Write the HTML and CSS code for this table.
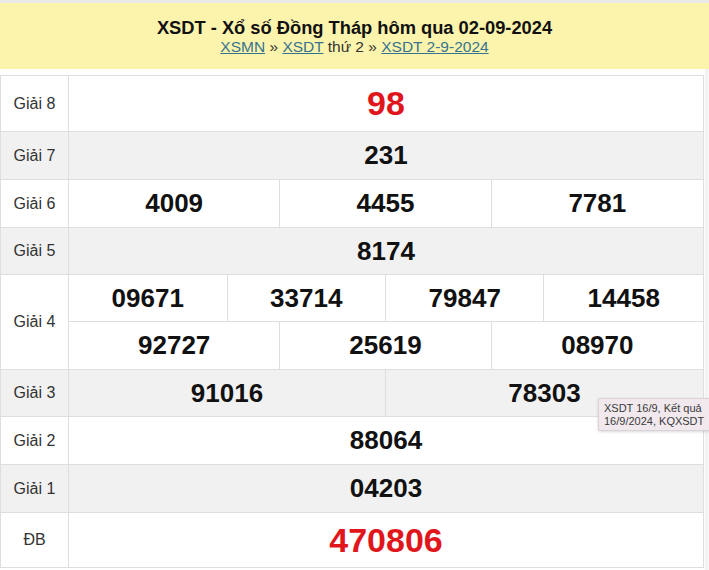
FILE: index.html
```html
<!DOCTYPE html>
<html lang="vi">
<head>
<meta charset="utf-8">
<title>XSDT 02-09-2024</title>
<link rel="stylesheet" href="styles.css">
</head>
<body>
<div class="page">
  <header class="head">
    <h1 class="title">XSDT - Xổ số Đồng Tháp hôm qua 02-09-2024</h1>
    <div class="crumbs"><a href="#">XSMN</a> » <a href="#">XSDT</a> thứ 2 » <a href="#">XSDT 2-9-2024</a></div>
  </header>
  <div class="results">
    <div class="lbl r8">Giải 8</div>
    <div class="num r8 full big red">98</div>

    <div class="lbl alt">Giải 7</div>
    <div class="num alt full">231</div>

    <div class="lbl">Giải 6</div>
    <div class="num s4">4009</div>
    <div class="num s4">4455</div>
    <div class="num s4 last">7781</div>

    <div class="lbl alt">Giải 5</div>
    <div class="num alt full">8174</div>

    <div class="lbl g4">Giải 4</div>
    <div class="num s3">09671</div>
    <div class="num s3">33714</div>
    <div class="num s3">79847</div>
    <div class="num s3 last">14458</div>
    <div class="num s4">92727</div>
    <div class="num s4">25619</div>
    <div class="num s4 last">08970</div>

    <div class="lbl alt">Giải 3</div>
    <div class="num alt s6">91016</div>
    <div class="num alt s6 last">78303</div>

    <div class="lbl">Giải 2</div>
    <div class="num full">88064</div>

    <div class="lbl alt">Giải 1</div>
    <div class="num alt full">04203</div>

    <div class="lbl rdb">ĐB</div>
    <div class="num rdb full huge red">470806</div>
  </div>
  <div class="tooltip">XSDT 16/9, Kết quả<br>16/9/2024, KQXSDT</div>
</div>
</body>
</html>
```

FILE: styles.css
```css
html, body {
  margin: 0;
  padding: 0;
  background: #ffffff;
  overflow: hidden;
}
body {
  font-family: "Liberation Sans", Arial, sans-serif;
  color: #111;
}
.page {
  position: relative;
  width: 709px;
  height: 570px;
  padding-top: 3px;
  background: linear-gradient(to right, #fff 0, #fff 704px, #f1f1f1 706px, #f7f7f7 709px);
}
.head {
  background: #fcf4ad;
  height: 66px;
  box-sizing: border-box;
  padding-top: 15px;
  text-align: center;
  box-shadow: 0 -3px 0 #e9e9e9;
}
.title {
  margin: 0;
  font-size: 18.3px;
  line-height: 20px;
  font-weight: bold;
  color: #111;
}
.crumbs {
  margin-top: 0;
  font-size: 15.5px;
  line-height: 18px;
  color: #333;
}
.crumbs a {
  color: #37738f;
  text-decoration: underline;
}
.results {
  margin-top: 6px;
  width: 704px;
  display: grid;
  grid-template-columns: 68px repeat(12, 1fr);
  grid-template-rows: 56px 48px 48px 47px 47px 48px 47px 48px 48px 55px;
  border-top: 1px solid #dedede;
  border-left: 1px solid #dedede;
  border-right: 1px solid #dedede;
  box-sizing: border-box;
}
.lbl {
  grid-column: 1;
  display: flex;
  align-items: center;
  justify-content: center;
  font-size: 16px;
  color: #333;
  border-right: 1px solid #dedede;
  border-bottom: 1px solid #dedede;
  background: #fff;
}
.g4 {
  grid-row: span 2;
}
.num {
  display: flex;
  align-items: center;
  justify-content: center;
  font-size: 26px;
  font-weight: bold;
  color: #111;
  border-right: 1px solid #dedede;
  border-bottom: 1px solid #dedede;
  background: #fff;
}
.num.last, .num.full {
  border-right: none;
}
.alt {
  background: #f1f1f1;
}
.full { grid-column: 2 / span 12; }
.s3 { grid-column: span 3; }
.s4 { grid-column: span 4; }
.s6 { grid-column: span 6; }
.big { font-size: 34px; }
.huge { font-size: 34px; }
.red { color: #e0161c; }
.tooltip {
  position: absolute;
  left: 598px;
  top: 398px;
  width: 111px;
  height: 33px;
  box-sizing: border-box;
  padding: 3px 0 3px 5px;
  background: #f1e9ee;
  border: 1px solid #d9d2d6;
  border-right: none;
  border-radius: 2px 0 0 2px;
  font-size: 11px;
  line-height: 13px;
  color: #3a3a3a;
  white-space: nowrap;
  box-shadow: 0 1px 3px rgba(0,0,0,0.15);
}
```
